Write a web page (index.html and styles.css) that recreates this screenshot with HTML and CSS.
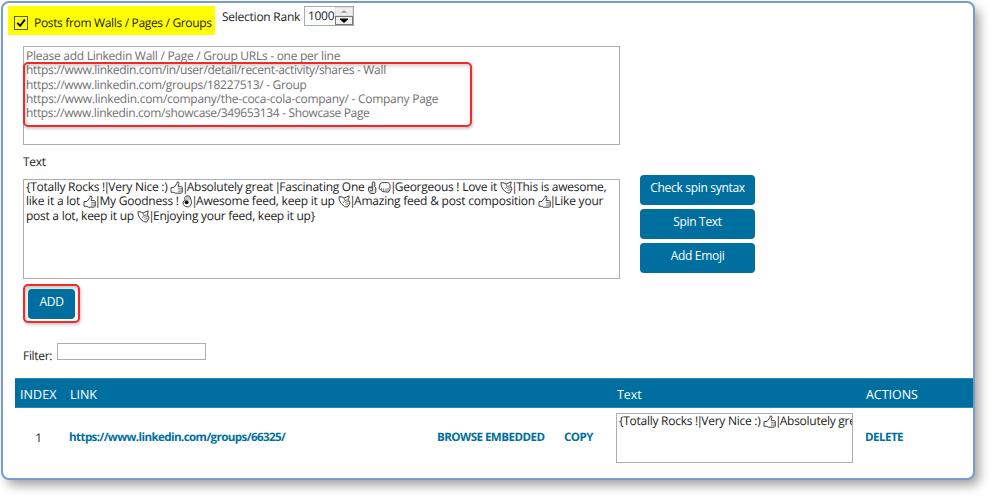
FILE: index.html
```html
<!DOCTYPE html>
<html lang="en">
<head>
<meta charset="utf-8">
<title>Posts from Walls / Pages / Groups</title>
<link rel="stylesheet" href="styles.css">
</head>
<body>
<svg class="defs" aria-hidden="true">
  <symbol id="thumb" viewBox="0 0 13 13">
    <path d="M1 6.500h3L7 2.400V1.200Q9 .3 9 2.500L8 5.600h3.500q1 .2.8 1.100v4.500l-1 1H5.200L4 11.300H1z" fill="#fff" stroke="#444" stroke-width="1"/>
    <path d="M8 7.500h4M8 9h4M8 10.700h4" stroke="#777" stroke-width=".8"/>
  </symbol>
  <symbol id="clap" viewBox="0 0 13 13">
    <path d="M1 1.500L4 2l2 1L11.200.8l-.7 4L12 8l-2.200 4-3-.3L3 8.500 1.300 5z" fill="#fff" stroke="#444" stroke-width="1"/>
    <path d="M6 3l1 2.500L5 8M7 5.500l3-.7M7.200 7.400l3.500-1M7.500 9.500l3-1" fill="none" stroke="#666" stroke-width=".9"/>
  </symbol>
  <symbol id="point" viewBox="0 0 10 13">
    <path d="M4.800 6V1.300q1.500-1 2.500 0v4.500l1 1v4.500L6.800 12.500H3L1 9.500V6.300z" fill="#ddd" stroke="#444" stroke-width="1"/>
    <path d="M1.500 6.200h3.300v3.500H2.500" fill="none" stroke="#444" stroke-width="1"/>
  </symbol>
  <symbol id="fist" viewBox="0 0 13 13">
    <path d="M2 3l2-1.400h6l2 1.900v5.200l-1.700 2.500-6-.7L1 7.200z" fill="#fff" stroke="#444" stroke-width="1"/>
    <path d="M3.500 7v3M5.700 7.300v3M8 7.300v3M10 7v3" stroke="#666" stroke-width=".9"/>
  </symbol>
  <symbol id="ok" viewBox="0 0 11 13">
    <path d="M3 5Q2 2 4 1.200Q6 .2 8 1.600L9 5q1.300 3-.4 5.300-2 2.600-5 1.200Q.3 10 1 7z" fill="#fff" stroke="#444" stroke-width="1"/>
    <path d="M5 1v4M7 1.300v4" stroke="#777" stroke-width=".8"/>
    <circle cx="4.600" cy="7.200" r="2" fill="#111"/>
  </symbol>
</svg>
<main class="panel">
  <div class="top">
    <label class="highlight"><span class="check"><svg viewBox="0 0 12 12"><path d="M2.300 5.800l2.800 3 4.800-6.200" fill="none" stroke="#000" stroke-width="1.900"/></svg></span><span class="t-posts">Posts from Walls / Pages / Groups</span></label>
    <span class="rank">Selection Rank</span>
    <div class="spinner"><span class="num">1000</span>
      <span class="steps"><i class="step off"><svg viewBox="0 0 16 7"><path d="M4.500 5L8 2l3.500 3z" fill="#aaa"/></svg></i><i class="step"><svg viewBox="0 0 16 7"><path d="M4 1.500h8v1L8 6 4 2.500z" fill="#000"/></svg></i></span>
    </div>
  </div>
  <div class="box urls">
    <span class="line u1">Please add Linkedin Wall / Page / Group URLs - one per line</span>
    <span class="line u2">https://www.linkedin.com/in/user/detail/recent-activity/shares - Wall</span>
    <span class="line u3">https://www.linkedin.com/groups/18227513/ - Group</span>
    <span class="line u4">https://www.linkedin.com/company/the-coca-cola-company/ - Company Page</span>
    <span class="line u5">https://www.linkedin.com/showcase/349653134 - Showcase Page</span>
    <div class="callout"></div>
  </div>
  <div class="label">Text</div>
  <div class="editor">
    <div class="box spin">
      <span class="line s1">{Totally Rocks !<i class="bar">|</i>Very Nice :) <svg class="e"><use href="#thumb"/></svg><i class="bar">|</i>Absolutely great <i class="bar">|</i>Fascinating One <svg class="e narrow"><use href="#point"/></svg><svg class="e"><use href="#fist"/></svg><i class="bar">|</i>Georgeous ! Love it <svg class="e"><use href="#clap"/></svg><i class="bar">|</i>This is awesome,</span>
      <span class="line s2">like it a lot <svg class="e"><use href="#thumb"/></svg><i class="bar">|</i>My Goodness ! <svg class="e narrow"><use href="#ok"/></svg><i class="bar">|</i>Awesome feed, keep it up <svg class="e"><use href="#clap"/></svg><i class="bar">|</i>Amazing feed &amp; post composition <svg class="e"><use href="#thumb"/></svg><i class="bar">|</i>Like your</span>
      <span class="line s3">post a lot, keep it up <svg class="e"><use href="#clap"/></svg><i class="bar">|</i>Enjoying your feed, keep it up}</span>
    </div>
    <div class="buttons">
      <button class="btn">Check spin syntax</button>
      <button class="btn">Spin Text</button>
      <button class="btn">Add Emoji</button>
    </div>
  </div>
  <div class="addring"><button class="btn add">ADD</button></div>
  <div class="filter"><span class="t-filter">Filter:</span><span class="field"></span></div>
  <div class="grid head"><span class="h1">INDEX</span><span>LINK</span><span></span><span></span><span>Text</span><span>ACTIONS</span></div>
  <div class="grid row">
    <span class="idx">1</span><a class="url">https://www.linkedin.com/groups/66325/</a><a>BROWSE EMBEDDED</a><a>COPY</a>
    <div class="box cell"><span class="line s1">{Totally Rocks !<i class="bar">|</i>Very Nice :) <svg class="e"><use href="#thumb"/></svg><i class="bar">|</i>Absolutely great</span></div>
    <a>DELETE</a>
  </div>
</main>
</body>
</html>
```
FILE: styles.css
```css
* { box-sizing: border-box; }
body { margin: 0; width: 990px; height: 496px; overflow: hidden; background: #fff; font: 12px/14.3px "Open Sans", "Noto Sans", sans-serif; letter-spacing: -.3px; text-rendering: geometricPrecision; color: #222; }
.defs { position: absolute; width: 0; height: 0; }
.panel { margin: 1px 0 0 1px; width: 974px; height: 479px; border: 2px solid #7a9bc8; border-radius: 8px; background: #fff; box-shadow: 5px 6px 11px -1px rgba(0,0,0,.38); padding-top: 3px; }
.top { display: flex; align-items: flex-start; height: 40px; padding-left: 5px; white-space: nowrap; }
.highlight { display: flex; align-items: center; width: 207px; height: 29px; background: #ff0; padding: 5px 0 0 6px; }
.check { flex: none; width: 14px; height: 14px; border: 1px solid #555; margin-right: 6px; display: flex; }
.check svg { width: 12px; height: 12px; }
.t-posts { letter-spacing: -.33px; }
.rank { margin: 4px 0 0 7px; width: 82px; letter-spacing: -.25px; }
.spinner { display: flex; width: 50px; height: 20px; border: 1px solid #aaa; padding-left: 3px; }
.num { flex: none; width: 27px; padding-top: 2px; }
.steps { display: flex; flex-direction: column; flex: none; width: 18px; }
.step { display: flex; height: 9px; border: 1px solid #777; background: #eee; }
.step.off { border-color: #ddd; }
.step svg { width: 16px; height: 7px; }
.box { position: relative; border: 1px solid #abadb3; background: #fff; }
.line { display: block; white-space: nowrap; height: 14.3px; }
.bar { font-style: normal; margin: 0 -1.5px; }
.u1 { letter-spacing: -.27px; }
.u2 { letter-spacing: -.31px; }
.u3 { letter-spacing: -.32px; }
.u4 { letter-spacing: -.27px; }
.u5 { letter-spacing: -.35px; }
.s1 { letter-spacing: -.26px; }
.s2 { letter-spacing: -.22px; }
.s3 { letter-spacing: -.26px; }
.urls { width: 597px; height: 99px; margin-left: 20px; padding: 2px 0 0 2px; color: #707070; }
.callout { position: absolute; left: -1px; top: 15px; width: 449px; height: 65px; border: 2px solid #ee2a2a; border-radius: 5px; box-shadow: 1px 2px 3px rgba(0,0,0,.2), inset 1px 2px 4px rgba(0,0,0,.2); }
.label { margin: 10px 0 0 20px; height: 24px; }
.editor { display: flex; padding-left: 20px; }
.spin { width: 597px; height: 100px; padding: 0 0 0 2px; }
.e { display: inline-block; width: 13px; height: 13px; vertical-align: -3px; }
.e.narrow { width: 11px; }
.buttons { display: flex; flex-direction: column; gap: 4px; margin: -4px 0 0 20px; }
.btn { font: inherit; letter-spacing: -.3px; display: block; width: 115px; height: 30px; border: 0; border-radius: 4px; background: #006f9f; color: #fff; padding: 0 0 4px; white-space: nowrap; }
.addring { width: 57px; height: 39px; margin: 5px 0 0 20px; border: 2px solid #ee2a2a; border-radius: 5px; padding: 3px 0 0 3px; background: #fff; box-shadow: 1px 2px 3px rgba(0,0,0,.2), inset 1px 2px 4px rgba(0,0,0,.25); }
.add { width: 47px; height: 30px; }
.filter { display: flex; margin: 20px 0 0 20px; height: 35px; }
.t-filter { width: 34px; padding-top: 6px; }
.field { width: 149px; height: 17px; border: 1px solid #abadb3; }
.grid { display: grid; grid-template-columns: 54px 368px 127px 52px 249px 1fr; align-items: center; margin-left: 12px; white-space: nowrap; }
.head { height: 30px; background: #006f9f; border: 1px solid #2c88b3; border-width: 1px 0; color: #fff; padding-top: 4px; padding-left: 1px; font-size: 12.5px; letter-spacing: -.05px; }
.h1 { padding-left: 4px; letter-spacing: .1px; }
.row { height: 59px; }
.row a { font-size: 11.6px; font-weight: 700; color: #006f9f; letter-spacing: -.55px; padding-top: 1px; }
.row .url { letter-spacing: -.6px; }
.idx { text-align: center; padding-right: 7px; padding-top: 1px; }
.cell { width: 237px; height: 50px; overflow: hidden; padding-left: 2px; }
```
